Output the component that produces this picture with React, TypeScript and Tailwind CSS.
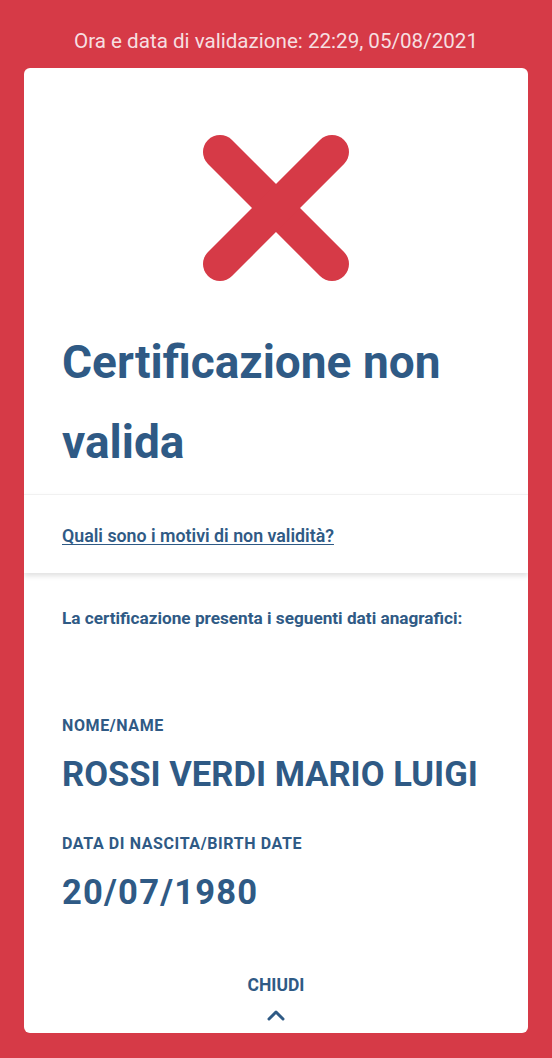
import React from "react";

const font = { fontFamily: "Roboto, 'Noto Sans', sans-serif" };

function Field({ label, value, wide }: { label: string; value: string; wide?: boolean }) {
  return (
    <div className="flex flex-col">
      <p className="text-[16px] font-bold uppercase leading-[20px] tracking-[0.6px] text-[#2f5a85]">{label}</p>
      <p
        className={
          "mt-[18px] text-[34.6px] font-bold leading-[40px] text-[#2f5a85] " +
          (wide ? "tracking-[1.2px]" : "tracking-[0px]")
        }
      >
        {value}
      </p>
    </div>
  );
}

export default function App() {
  return (
    <div style={font} className="flex h-[1058px] w-[552px] flex-col bg-[#d63a47] px-[24px] pb-[25px]">
      <p className="pt-[28px] pb-[14px] text-center text-[20.6px] leading-[26px] text-[#f6dfe1]">
        Ora e data di validazione: 22:29, 05/08/2021
      </p>

      <div className="flex flex-1 flex-col overflow-hidden rounded-[6px] bg-white">
        {/* esito */}
        <div className="flex justify-center pt-[66px]">
          <svg width="148" height="148" viewBox="0 0 148 148">
            <g stroke="#d63a47" strokeWidth="34" strokeLinecap="round">
              <line x1="18" y1="18" x2="130" y2="130" />
              <line x1="130" y1="18" x2="18" y2="130" />
            </g>
          </svg>
        </div>

        <h1 className="mt-[40px] px-[38px] text-[46px] font-bold leading-[80px] text-[#2f5a85]">
          Certificazione non valida
        </h1>

        <div className="mt-[12px] border-t border-[#f1f1f1] px-[38px] pt-[30px] pb-[24px] shadow-[0_3px_5px_rgba(0,0,0,0.12)]">
          <a className="text-[17.8px] font-semibold leading-[22px] text-[#2f5a85] underline underline-offset-2">
            Quali sono i motivi di non validità?
          </a>
        </div>

        <div className="flex flex-1 flex-col px-[38px] pt-[34px]">
          <p className="text-[17.2px] font-bold leading-[22px] text-[#2f5a85]">
            La certificazione presenta i seguenti dati anagrafici:
          </p>

          <div className="mt-[87px] flex flex-col gap-[40px]">
            <Field label="Nome/Name" value="ROSSI VERDI MARIO LUIGI" />
            <Field label="Data di nascita/Birth date" value="20/07/1980" wide />
          </div>

          <div className="mt-auto flex flex-col items-center pb-[11px]">
            <p className="text-[17.5px] font-bold leading-[20px] text-[#2f5a85]">CHIUDI</p>
            <svg width="20" height="14" viewBox="0 0 20 14" className="mt-[13px]">
              <path d="M3 11 L10 4 L17 11" fill="none" stroke="#2f5a85" strokeWidth="3" strokeLinecap="round" strokeLinejoin="round" />
            </svg>
          </div>
        </div>
      </div>
    </div>
  );
}
